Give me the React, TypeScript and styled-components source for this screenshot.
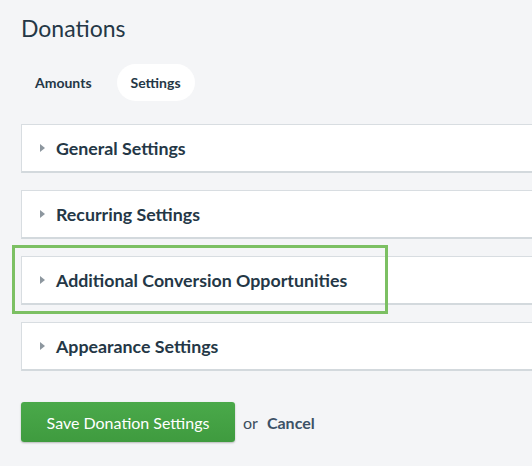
import React from "react";
import styled, { createGlobalStyle } from "styled-components";

const GlobalStyle = createGlobalStyle`
  html, body {
    margin: 0;
    padding: 0;
    background: #f4f5f7;
    font-family: Lato, "Open Sans", sans-serif;
    color: #243746;
  }
`;

const Page = styled.div`
  padding: 13px 0 0 21px;
  overflow: hidden;
  width: 532px;
  height: 466px;
  box-sizing: border-box;
`;

const Title = styled.h1`
  margin: 0;
  font-size: 23px;
  font-weight: 400;
  line-height: 30px;
  color: #243746;
`;

const Tabs = styled.div`
  display: flex;
  align-items: center;
  margin-top: 21px;
  gap: 11px;
`;

const Tab = styled.button<{ $active?: boolean }>`
  border: none;
  font-family: inherit;
  font-size: 14px;
  font-weight: 700;
  color: #243746;
  height: 37px;
  padding: 0 14px;
  border-radius: 19px;
  background: ${(p) => (p.$active ? "#ffffff" : "transparent")};
  cursor: pointer;
`;

const Panels = styled.div`
  display: flex;
  flex-direction: column;
  gap: 17px;
  margin-top: 23px;
  margin-right: -20px;
`;

const PanelWrap = styled.div`
  position: relative;
`;

const Panel = styled.div`
  display: flex;
  align-items: center;
  height: 49px;
  box-sizing: border-box;
  background: #ffffff;
  border: 1px solid #d8dde1;
  border-bottom: 2px solid #d3d9dd;
  padding-left: 18px;
`;

const Caret = styled.span`
  width: 0;
  height: 0;
  border-top: 4px solid transparent;
  border-bottom: 4px solid transparent;
  border-left: 5px solid #8d979f;
  margin-right: 11px;
`;

const PanelTitle = styled.span`
  font-size: 17.8px;
  font-weight: 700;
  color: #243746;
`;

const Highlight = styled.div`
  position: absolute;
  left: -9px;
  top: -11px;
  width: 376px;
  height: 69px;
  box-sizing: border-box;
  border: 3px solid #7cc063;
  pointer-events: none;
`;

const Actions = styled.div`
  display: flex;
  align-items: center;
  margin-top: 31px;
  gap: 8px;
`;

const SaveButton = styled.button`
  height: 40px;
  width: 214px;
  border: none;
  border-radius: 3px;
  background: linear-gradient(#4aa94a, #3f9b3f);
  box-shadow: 0 1px 2px rgba(0, 0, 0, 0.25);
  color: #ffffff;
  font-family: inherit;
  font-size: 16px;
  font-weight: 400;
`;

const Or = styled.span`
  font-size: 16px;
  color: #3c4e5e;
`;

const CancelLink = styled.a`
  font-size: 16px;
  font-weight: 700;
  color: #3c5166;
  text-decoration: none;
  margin-left: 1px;
`;

const sections = [
  "General Settings",
  "Recurring Settings",
  "Additional Conversion Opportunities",
  "Appearance Settings",
];

export default function App() {
  return (
    <Page>
      <GlobalStyle />
      <Title>Donations</Title>
      <Tabs>
        <Tab>Amounts</Tab>
        <Tab $active>Settings</Tab>
      </Tabs>
      <Panels>
        {sections.map((s) => (
          <PanelWrap key={s}>
            <Panel>
              <Caret />
              <PanelTitle>{s}</PanelTitle>
            </Panel>
            {s === "Additional Conversion Opportunities" && <Highlight />}
          </PanelWrap>
        ))}
      </Panels>
      <Actions>
        <SaveButton>Save Donation Settings</SaveButton>
        <Or>or</Or>
        <CancelLink href="#">Cancel</CancelLink>
      </Actions>
    </Page>
  );
}
